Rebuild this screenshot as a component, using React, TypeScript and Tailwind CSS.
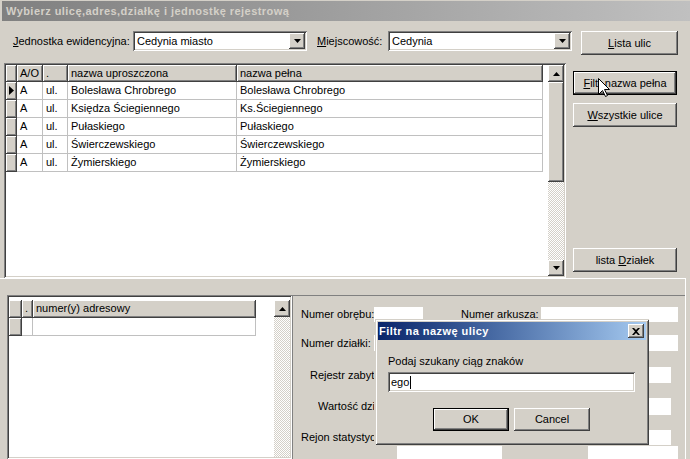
import { ReactNode } from 'react';
import clsx from 'clsx';

// Win2000 bevels
const raised =
  'shadow-[inset_-1px_-1px_0_#404040,inset_1px_1px_0_#ffffff,inset_-2px_-2px_0_#808080,inset_2px_2px_0_#d4d0c8]';
const sunken =
  'shadow-[inset_1px_1px_0_#808080,inset_-1px_-1px_0_#ffffff,inset_2px_2px_0_#404040,inset_-2px_-2px_0_#d4d0c8]';
const winFrame =
  'shadow-[inset_1px_1px_0_#d4d0c8,inset_-1px_-1px_0_#404040,inset_2px_2px_0_#ffffff,inset_-2px_-2px_0_#808080]';
const headCell =
  'flex items-center pl-[3px] border-r border-b border-[#404040] bg-[#d4d0c8] shadow-[inset_1px_1px_0_#ffffff,inset_-1px_-1px_0_#808080]';
const dataCell = 'flex items-center pl-[3px] border-r border-b border-[#c0c0c0] bg-white whitespace-nowrap overflow-hidden';
const dither = 'bg-[repeating-conic-gradient(#d4d0c8_0%_25%,#ffffff_0%_50%)] bg-[length:2px_2px]';
const label = 'shrink-0 overflow-hidden whitespace-nowrap';

const streets = [
  ['A', 'ul.', 'Bolesława Chrobrego', 'Bolesława Chrobrego'],
  ['A', 'ul.', 'Księdza Ściegiennego', 'Ks.Ściegiennego'],
  ['A', 'ul.', 'Pułaskiego', 'Pułaskiego'],
  ['A', 'ul.', 'Świerczewskiego', 'Świerczewskiego'],
  ['A', 'ul.', 'Żymierskiego', 'Żymierskiego'],
];

function Button({ className, isDefault, children }: { className: string; isDefault?: boolean; children: ReactNode }) {
  if (isDefault) {
    return (
      <div className={clsx('border border-black bg-[#d4d0c8]', className)}>
        <div className={clsx('flex h-full w-full items-center justify-center', raised)}>{children}</div>
      </div>
    );
  }
  return <div className={clsx('flex items-center justify-center bg-[#d4d0c8]', raised, className)}>{children}</div>;
}

function Arrow({ up, className }: { up?: boolean; className?: string }) {
  return (
    <div className={clsx('flex shrink-0 items-center justify-center bg-[#d4d0c8]', raised, className)}>
      <svg width="7" height="4" viewBox="0 0 7 4">
        {up ? <path d="M3.5 0 L7 4 L0 4 Z" fill="#000" /> : <path d="M0 0 L7 0 L3.5 4 Z" fill="#000" />}
      </svg>
    </div>
  );
}

function Combo({ className, value }: { className: string; value: string }) {
  return (
    <div className={clsx('flex h-[20px] items-center bg-white p-[2px]', sunken, className)}>
      <span className="flex-1 truncate pl-[2px]">{value}</span>
      <Arrow className="h-[16px] w-[16px]" />
    </div>
  );
}

export default function App() {
  return (
    <div className="relative h-[459px] w-[690px] overflow-hidden bg-[#d4d0c8] pt-px font-['Liberation_Sans',Arial,sans-serif] text-[11px] text-black">
      {/* title bar (inactive) */}
      <div className="ml-[2px] flex h-[20px] items-center bg-gradient-to-r from-[#808080] to-[#c0c0c0] pl-[4px] text-[11px] font-bold tracking-[0.45px] text-[#d4d0c8]">
        Wybierz ulicę,adres,działkę i jednostkę rejestrową
      </div>

      {/* filters */}
      <div className="flex h-[42px] items-start pt-[10px]">
        <div className="ml-[13px] flex h-[20px] w-[120px] items-center">
          <span className="underline">J</span>ednostka ewidencyjna:
        </div>
        <Combo className="w-[174px]" value="Cedynia miasto" />
        <div className="ml-[10px] flex h-[20px] w-[71px] items-center">
          <span className="underline">M</span>iejscowość:
        </div>
        <Combo className="w-[184px]" value="Cedynia" />
        <Button className="ml-[9px] h-[24px] w-[97px]">
          <span>
            <span className="underline">L</span>ista ulic
          </span>
        </Button>
      </div>

      {/* streets grid */}
      <div className="flex h-[215px]">
        <div className={clsx('ml-[4px] flex h-full w-[562px] bg-white p-[2px]', sunken)}>
          <div className="flex-1">
            <div className="flex h-[17px]">
              <div className={clsx(headCell, 'w-[11px]')} />
              <div className={clsx(headCell, 'w-[26px]')}>A/O</div>
              <div className={clsx(headCell, 'w-[25px]')}>.</div>
              <div className={clsx(headCell, 'w-[169px]')}>nazwa uproszczona</div>
              <div className={clsx(headCell, 'w-[306px]')}>nazwa pełna</div>
            </div>
            {streets.map((r, i) => (
              <div key={r[2]} className="flex h-[18px]">
                <div className={clsx(headCell, 'w-[11px] justify-start pl-[1px]')}>
                  {i === 0 && (
                    <svg width="5" height="9" viewBox="0 0 5 9">
                      <path d="M0 0 L5 4.5 L0 9 Z" fill="#000" />
                    </svg>
                  )}
                </div>
                <div className={clsx(dataCell, 'w-[26px]')}>{r[0]}</div>
                <div className={clsx(dataCell, 'w-[25px]')}>{r[1]}</div>
                <div className={clsx(dataCell, 'w-[169px]')}>{r[2]}</div>
                <div className={clsx(dataCell, 'w-[306px]')}>{r[3]}</div>
              </div>
            ))}
          </div>
          <div className="flex w-[16px] flex-col">
            <Arrow up className="h-[17px] w-[16px]" />
            <div className={clsx('h-[100px] bg-[#d4d0c8]', raised)} />
            <div className={clsx('flex-1', dither)} />
            <Arrow className="h-[16px] w-[16px]" />
          </div>
        </div>

        <div className="flex w-[124px] flex-col pb-[6px] pl-[7px] pt-[8px]">
          <Button isDefault className="h-[24px] w-[104px]">
            <span>
              <span className="underline">F</span>iltr nazwa pełna
            </span>
          </Button>
          <Button className="mt-[8px] h-[24px] w-[104px]">
            <span>
              <span className="underline">W</span>szystkie ulice
            </span>
          </Button>
          <Button className="mt-auto h-[24px] w-[104px]">
            <span>
              lista <span className="underline">D</span>ziałek
            </span>
          </Button>
        </div>
      </div>

      {/* lower part */}
      <div className="flex h-[181px] w-[686px] border-r border-t border-white pt-[16px]">
        <div className={clsx('ml-[7px] flex h-full w-[285px] bg-white p-[2px]', sunken)}>
          <div className="flex-1 pt-[3px]">
            <div className="flex h-[18px]">
              <div className={clsx(headCell, 'w-[13px]')} />
              <div className={clsx(headCell, 'w-[11px]')}>.</div>
              <div className={clsx(headCell, 'w-[223px]')}>numer(y) adresowy</div>
            </div>
            <div className="flex h-[18px]">
              <div className={clsx(headCell, 'w-[13px]')} />
              <div className={clsx(dataCell, 'w-[11px]')} />
              <div className={clsx(dataCell, 'w-[223px]')} />
            </div>
          </div>
          <div className="flex w-[16px] flex-col bg-white pt-[3px]">
            <Arrow up className="h-[17px] w-[16px]" />
            <div className={clsx('flex-1', dither)} />
          </div>
        </div>

        <div className="flex flex-1 flex-col border-l border-t border-[#808080]">
          <div className="mt-[11px] flex h-[15px] items-center">
            <span className={clsx(label, 'ml-[8px] w-[73px]')}>Numer obrębu:</span>
            <div className="h-full w-[49px] shrink-0 bg-white" />
            <span className={clsx(label, 'ml-[38px] w-[80px]')}>Numer arkusza:</span>
            <div className="h-full w-[137px] shrink-0 bg-white" />
          </div>
          <div className="mt-[13px] flex h-[16px] items-center">
            <span className={clsx(label, 'ml-[8px] w-[73px]')}>Numer działki:</span>
            <div className="h-full w-[304px] shrink-0 bg-white" />
          </div>
          <div className="mt-[16px] flex h-[16px] items-center">
            <span className={clsx(label, 'ml-[17px] w-[64px]')}>Rejestr zabytków:</span>
            <div className="ml-[28px] h-full w-[269px] shrink-0 bg-white" />
          </div>
          <div className="mt-[15px] flex h-[17px] items-center">
            <span className={clsx(label, 'ml-[25px] w-[56px]')}>Wartość działki:</span>
            <div className="ml-[28px] h-full w-[269px] shrink-0 bg-white" />
          </div>
          <div className="mt-[15px] flex h-[15px] items-center">
            <span className={clsx(label, 'ml-[8px] w-[73px]')}>Rejon statystyczny:</span>
            <div className="ml-[28px] h-full w-[269px] shrink-0 bg-white" />
          </div>
          <div className="mt-px flex h-[16px] items-start">
            <span className={clsx(label, 'ml-[8px] mt-[9px] w-[96px]')}>Położenie:</span>
            <div className="h-full w-[105px] shrink-0 bg-white" />
            <div className="ml-[86px] h-full w-[90px] shrink-0 bg-white" />
          </div>
        </div>
      </div>

      {/* filter dialog */}
      <div className={clsx('absolute left-[375px] top-[319px] h-[126px] w-[274px] bg-[#d4d0c8] p-[3px]', winFrame)}>
        <div className="flex h-[18px] items-center bg-gradient-to-r from-[#0a246a] to-[#a6caf0] pl-[1px] pr-[2px] font-bold text-white">
          <span className="flex-1 tracking-[0.45px]">Filtr na nazwę ulicy</span>
          <div className={clsx('flex h-[14px] w-[16px] items-center justify-center bg-[#d4d0c8]', raised)}>
            <svg width="8" height="7" viewBox="0 0 8 7">
              <path d="M0 0 L2 0 L4 2 L6 0 L8 0 L5 3.5 L8 7 L6 7 L4 5 L2 7 L0 7 L3 3.5 Z" fill="#000" />
            </svg>
          </div>
        </div>
        <div className="ml-[10px] mt-[15px] flex h-[13px] items-center">Podaj szukany ciąg znaków</div>
        <div className={clsx('ml-[10px] mt-[4px] flex h-[20px] w-[247px] items-center bg-white pl-[3px]', sunken)}>
          <span>ego</span>
          <span className="ml-px h-[13px] w-px bg-black" />
        </div>
        <div className="ml-[55px] mt-[16px] flex">
          <Button isDefault className="h-[23px] w-[76px]">
            OK
          </Button>
          <Button className="ml-[5px] h-[23px] w-[76px]">Cancel</Button>
        </div>
      </div>

      {/* mouse pointer */}
      <svg className="absolute left-[598px] top-[78px]" width="12" height="20" viewBox="0 0 12 20">
        <path d="M0.5 0.5 L0.5 16.5 L4.5 12.5 L7.5 18.5 L9.5 17.5 L6.5 11.5 L11.5 11.5 Z" fill="#fff" stroke="#000" strokeWidth="1" />
      </svg>
    </div>
  );
}
